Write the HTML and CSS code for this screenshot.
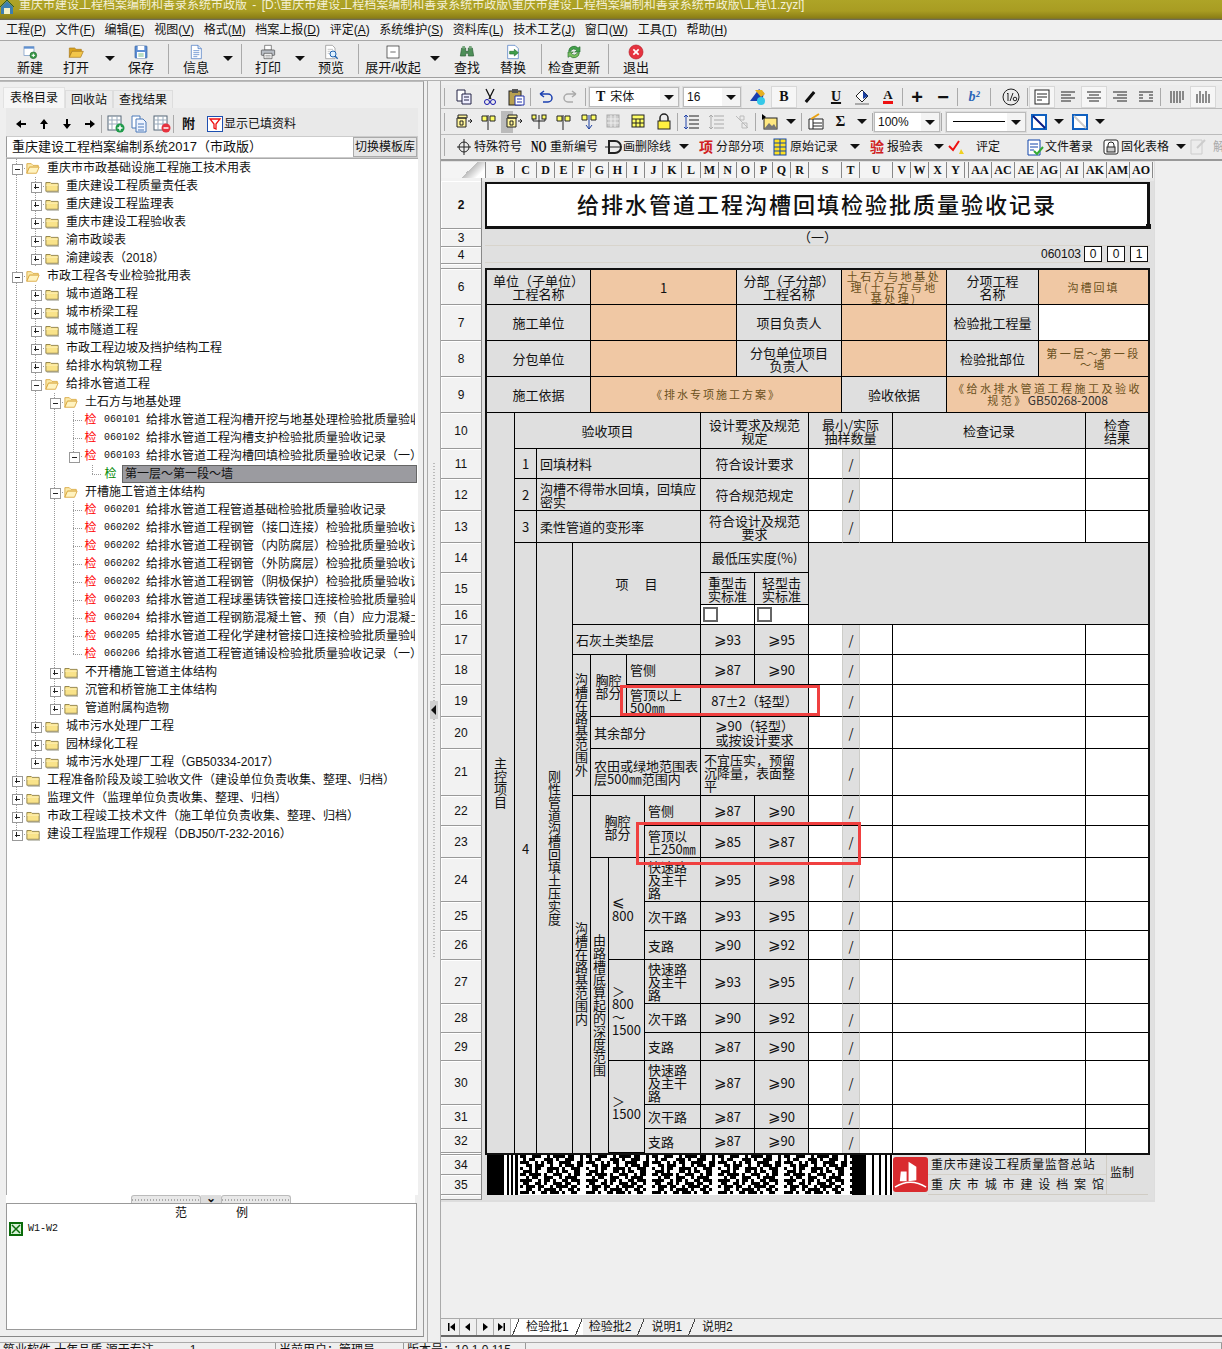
FILE: index.html
```html
<!DOCTYPE html>
<html lang="zh">
<head>
<meta charset="utf-8">
<title>重庆市建设工程档案编制和善录系统市政版</title>
<link rel="stylesheet" href="styles.css">
</head>
<body>
<svg class="defs" width="0" height="0">
  <defs>
    <symbol id="new" viewBox="0 0 24 24"><rect x="3" y="4" width="15" height="13" fill="#fff" stroke="#6b8fc0"/><rect x="3" y="4" width="15" height="3" fill="#5f8fd0"/><circle cx="17" cy="17" r="5" fill="#3a9a4a" stroke="#1f6a2e"/><path d="M14.500 17h5M17 14.500v5" stroke="#fff" stroke-width="1.500"/></symbol>
    <symbol id="open" viewBox="0 0 24 24"><path d="M2 6h8l2 2h8v3H6l-4 9z" fill="#d9a21f" stroke="#a8791a"/><path d="M6 11h17l-4 9H2z" fill="#f3c64a" stroke="#a8791a"/></symbol>
    <symbol id="save" viewBox="0 0 24 24"><rect x="3" y="3" width="18" height="18" rx="1" fill="#5d8ed4" stroke="#2f5f9f"/><rect x="7" y="3" width="10" height="6" fill="#fff"/><rect x="6" y="12" width="12" height="9" fill="#fff"/><path d="M8 15h8M8 18h8" stroke="#2f9a4a"/></symbol>
    <symbol id="info" viewBox="0 0 24 24"><path d="M5 2h10l5 5v15H5z" fill="#fff" stroke="#3d6fc0"/><path d="M15 2v5h5" fill="#d7e4f6" stroke="#3d6fc0"/><path d="M8 10h9M8 13h9M8 16h9M8 19h6" stroke="#3d6fc0"/></symbol>
    <symbol id="print" viewBox="0 0 24 24"><path d="M7 2h10v7H7z" fill="#fff" stroke="#555"/><rect x="2" y="9" width="20" height="8" rx="1" fill="#b9bec5" stroke="#444"/><path d="M6 14h12v8H6z" fill="#fff" stroke="#444"/><path d="M8 17h8M8 19.500h8" stroke="#777"/></symbol>
    <symbol id="preview" viewBox="0 0 24 24"><path d="M4 2h10l4 4v16H4z" fill="#fff" stroke="#888"/><path d="M7 8h8M7 11h4M7 14h4" stroke="#aaa"/><circle cx="15" cy="15" r="4.500" fill="#dff1ff" stroke="#1e62b0" stroke-width="1.500"/><path d="M18 18l4 4" stroke="#1e62b0" stroke-width="2"/></symbol>
    <symbol id="expand" viewBox="0 0 24 24"><rect x="3" y="3" width="18" height="18" fill="#fff" stroke="#222"/><path d="M8 12h8" stroke="#222"/></symbol>
    <symbol id="find" viewBox="0 0 24 24"><path d="M4 6h6v5h4V6h6l2 12h-8v-4h-4v4H2z" fill="#4e8f58" stroke="#2c5e35"/><rect x="5" y="3" width="4" height="4" fill="#7aaa80"/><rect x="15" y="3" width="4" height="4" fill="#7aaa80"/></symbol>
    <symbol id="replace" viewBox="0 0 24 24"><path d="M4 2h11l5 5v15H4z" fill="#fff" stroke="#3d6fc0"/><path d="M7 11h7V8l6 5-6 5v-3H7z" fill="#3f9f4a" stroke="#217030"/></symbol>
    <symbol id="update" viewBox="0 0 24 24"><path d="M4 11a8 8 0 0 1 14-5l3-2v8h-8l3-2a5 5 0 0 0-9 1z" fill="#43a04a" stroke="#257030"/><path d="M20 13a8 8 0 0 1-14 5l-3 2v-8h8l-3 2a5 5 0 0 0 9-1z" fill="#7cc060" stroke="#257030"/></symbol>
    <symbol id="exit" viewBox="0 0 24 24"><circle cx="12" cy="12" r="10.500" fill="#e6333f" stroke="#b81a26"/><path d="M8 8l8 8M16 8l-8 8" stroke="#fff" stroke-width="2.500"/></symbol>
    <symbol id="fo" viewBox="0 0 16 16"><path d="M1 3h5l2 2h6v2H4l-3 7z" fill="#fbe9a8" stroke="#d9a840"/><path d="M4 7h11l-3 7H1z" fill="#fff3c0" stroke="#d9a840"/></symbol>
    <symbol id="fc" viewBox="0 0 16 16"><path d="M1 4h5l1 1h8v9H1z" fill="#f9e38a" stroke="#8a7a40"/><path d="M1 7h14" stroke="#fff4c0"/><path d="M2 15h14V6" fill="none" stroke="#998" /></symbol>
    <symbol id="ins" viewBox="0 0 18 18"><path d="M3 2h9v3h-9zM2 5h9v9H2zM5 8h3v4H5z" fill="#fff59a" stroke="#222"/><path d="M13 8h4M15 6l2 2-2 2" stroke="#222" fill="none"/></symbol>
    <symbol id="cross" viewBox="0 0 18 18"><path d="M2 3h5v5H2zM10 3h5v5h-5z" fill="#ff6" stroke="#222"/><path d="M8 2v15" stroke="#222"/></symbol>
    <symbol id="li" viewBox="0 0 18 18"><path d="M6 3h10M6 7h10M6 11h10M6 15h10" stroke="#222"/><path d="M3 2v14M1 4l2-2 2 2M1 14l2 2 2-2" stroke="#24a" fill="none"/></symbol>
    <symbol id="lid" viewBox="0 0 18 18"><path d="M6 3h10M6 7h10M6 11h10M6 15h10" stroke="#aaa"/><path d="M3 2v14M1 4l2-2 2 2M1 14l2 2 2-2" stroke="#aaa" fill="none"/></symbol>
  </defs>
</svg>

<div class="app">
  <header class="titlebar">
    <svg class="house" viewBox="0 0 14 14"><path d="M1 7l6-6 6 6v7H1z" fill="#3d7fb0"/><path d="M4 8h6v6H4z" fill="#f3f0c8"/><path d="M0 7l7-7 7 7" fill="none" stroke="#2a5c2a"/></svg>
    <span>重庆市建设工程档案编制和善录系统市政版 - [D:\重庆市建设工程档案编制和善录系统市政版\重庆市建设工程档案编制和善录系统市政版\工程\1.zyzl]</span>
  </header>

  <nav class="menubar">
    <span>工程(<u>P</u>)</span><span>文件(<u>F</u>)</span><span>编辑(<u>E</u>)</span><span>视图(<u>V</u>)</span><span>格式(<u>M</u>)</span><span>档案上报(<u>D</u>)</span><span>评定(<u>A</u>)</span><span>系统维护(<u>S</u>)</span><span>资料库(<u>L</u>)</span><span>技术工艺(<u>J</u>)</span><span>窗口(<u>W</u>)</span><span>工具(<u>T</u>)</span><span>帮助(<u>H</u>)</span>
  </nav>

  <div class="toolbar">
    <div class="tb w44"><svg class="ic"><use href="#new"/></svg>新建</div>
    <div class="tb w48"><svg class="ic"><use href="#open"/></svg>打开</div>
    <div class="drop w20"></div>
    <div class="tb w42"><svg class="ic"><use href="#save"/></svg>保存</div>
    <div class="sep w12"></div>
    <div class="tb w44"><svg class="ic"><use href="#info"/></svg>信息</div>
    <div class="drop w20"></div>
    <div class="sep w6"></div>
    <div class="tb w48"><svg class="ic"><use href="#print"/></svg>打印</div>
    <div class="drop w16"></div>
    <div class="tb w46"><svg class="ic"><use href="#preview"/></svg>预览</div>
    <div class="sep w8"></div>
    <div class="tb w62"><svg class="ic"><use href="#expand"/></svg>展开/收起</div>
    <div class="drop w22"></div>
    <div class="tb w42"><svg class="ic"><use href="#find"/></svg>查找</div>
    <div class="tb w50"><svg class="ic"><use href="#replace"/></svg>替换</div>
    <div class="sep w6"></div>
    <div class="tb w60"><svg class="ic"><use href="#update"/></svg>检查更新</div>
    <div class="sep w8"></div>
    <div class="tb w48"><svg class="ic"><use href="#exit"/></svg>退出</div>
  </div>

  <main class="main">
    <aside class="left">
      <div class="tabs">
        <span class="tab on">表格目录</span><span class="tab">回收站</span><span class="tab">查找结果</span>
      </div>
      <div class="lbody">
        <div class="ltool">
          <svg class="arr" viewBox="0 0 12 12"><path d="M1 6l5-4v3h5v2H6v3z"/></svg>
          <svg class="arr" viewBox="0 0 12 12"><path d="M6 1l4 5H7v5H5V6H2z"/></svg>
          <svg class="arr" viewBox="0 0 12 12"><path d="M6 11l4-5H7V1H5v5H2z"/></svg>
          <svg class="arr" viewBox="0 0 12 12"><path d="M11 6L6 2v3H1v2h5v3z"/></svg>
          <i class="lsep sa"></i>
          <svg class="lic" viewBox="0 0 18 18"><rect x="1" y="1" width="13" height="14" fill="#fff" stroke="#567"/><path d="M1 5h13M1 9h13M5 1v14M10 1v14" stroke="#9ab"/><circle cx="13" cy="13" r="4.500" fill="#1f9a4a"/><path d="M10.500 13h5M13 10.500v5" stroke="#fff" stroke-width="1.500"/></svg>
          <svg class="lic" viewBox="0 0 18 18"><path d="M2 1h8v12H2z" fill="#fff" stroke="#4a78b8"/><path d="M6 4h7l3 3v10H6z" fill="#eef4ff" stroke="#4a78b8"/><path d="M8 9h6M8 12h6M8 15h6" stroke="#4a78b8"/></svg>
          <svg class="lic" viewBox="0 0 18 18"><rect x="1" y="1" width="13" height="14" fill="#fff" stroke="#567"/><path d="M1 5h13M1 9h13M5 1v14M10 1v14" stroke="#9ab"/><circle cx="13" cy="13" r="4.500" fill="#e6333f"/><path d="M10.500 13h5" stroke="#fff" stroke-width="1.500"/></svg>
          <i class="lsep sb"></i>
          <b class="fu">附</b>
          <svg class="filter" viewBox="0 0 16 16"><rect x=".5" y=".5" width="15" height="15" fill="#fff" stroke="#1d4fb0"/><path d="M3 3h10L9 8v5l-2-1V8z" fill="none" stroke="#e11" stroke-width="1.300"/></svg>
          <span class="ltxt">显示已填资料</span>
        </div>
        <div class="combo">
          <span class="combo-t">重庆建设工程档案编制系统2017（市政版）</span>
          <span class="combo-b">切换模板库</span>
        </div>
        <div class="tree">
          <div class="row"><i class="c m"></i><svg class="fd"><use href="#fo"/></svg><span>重庆市市政基础设施工程施工技术用表</span></div>
          <div class="row"><i class="c g"></i><i class="c p"></i><svg class="fd"><use href="#fc"/></svg><span>重庆建设工程质量责任表</span></div>
          <div class="row"><i class="c g"></i><i class="c p"></i><svg class="fd"><use href="#fc"/></svg><span>重庆建设工程监理表</span></div>
          <div class="row"><i class="c g"></i><i class="c p"></i><svg class="fd"><use href="#fc"/></svg><span>重庆市建设工程验收表</span></div>
          <div class="row"><i class="c g"></i><i class="c p"></i><svg class="fd"><use href="#fc"/></svg><span>渝市政竣表</span></div>
          <div class="row"><i class="c g"></i><i class="c p"></i><svg class="fd"><use href="#fc"/></svg><span>渝建竣表（2018）</span></div>
          <div class="row"><i class="c m"></i><svg class="fd"><use href="#fo"/></svg><span>市政工程各专业检验批用表</span></div>
          <div class="row"><i class="c g"></i><i class="c p"></i><svg class="fd"><use href="#fc"/></svg><span>城市道路工程</span></div>
          <div class="row"><i class="c g"></i><i class="c p"></i><svg class="fd"><use href="#fc"/></svg><span>城市桥梁工程</span></div>
          <div class="row"><i class="c g"></i><i class="c p"></i><svg class="fd"><use href="#fc"/></svg><span>城市隧道工程</span></div>
          <div class="row"><i class="c g"></i><i class="c p"></i><svg class="fd"><use href="#fc"/></svg><span>市政工程边坡及挡护结构工程</span></div>
          <div class="row"><i class="c g"></i><i class="c p"></i><svg class="fd"><use href="#fc"/></svg><span>给排水构筑物工程</span></div>
          <div class="row"><i class="c g"></i><i class="c m"></i><svg class="fd"><use href="#fo"/></svg><span>给排水管道工程</span></div>
          <div class="row"><i class="c g"></i><i class="c g"></i><i class="c m"></i><svg class="fd"><use href="#fo"/></svg><span>土石方与地基处理</span></div>
          <div class="row"><i class="c g"></i><i class="c g"></i><i class="c g"></i><i class="c t"></i><b class="jian">检</b><span class="code">060101</span><span>给排水管道工程沟槽开挖与地基处理检验批质量验收记录</span></div>
          <div class="row"><i class="c g"></i><i class="c g"></i><i class="c g"></i><i class="c t"></i><b class="jian">检</b><span class="code">060102</span><span>给排水管道工程沟槽支护检验批质量验收记录</span></div>
          <div class="row"><i class="c g"></i><i class="c g"></i><i class="c g"></i><i class="c m e"></i><b class="jian">检</b><span class="code">060103</span><span>给排水管道工程沟槽回填检验批质量验收记录（一）</span></div>
          <div class="row wide"><i class="c g"></i><i class="c g"></i><i class="c g"></i><i class="c"></i><i class="c l"></i><b class="jian ok">检</b><span class="sel">第一层～第一段～墙</span></div>
          <div class="row"><i class="c g"></i><i class="c g"></i><i class="c m"></i><svg class="fd"><use href="#fo"/></svg><span>开槽施工管道主体结构</span></div>
          <div class="row"><i class="c g"></i><i class="c g"></i><i class="c g"></i><i class="c t"></i><b class="jian">检</b><span class="code">060201</span><span>给排水管道工程管道基础检验批质量验收记录</span></div>
          <div class="row"><i class="c g"></i><i class="c g"></i><i class="c g"></i><i class="c t"></i><b class="jian">检</b><span class="code">060202</span><span>给排水管道工程钢管（接口连接）检验批质量验收记录</span></div>
          <div class="row"><i class="c g"></i><i class="c g"></i><i class="c g"></i><i class="c t"></i><b class="jian">检</b><span class="code">060202</span><span>给排水管道工程钢管（内防腐层）检验批质量验收记录</span></div>
          <div class="row"><i class="c g"></i><i class="c g"></i><i class="c g"></i><i class="c t"></i><b class="jian">检</b><span class="code">060202</span><span>给排水管道工程钢管（外防腐层）检验批质量验收记录</span></div>
          <div class="row"><i class="c g"></i><i class="c g"></i><i class="c g"></i><i class="c t"></i><b class="jian">检</b><span class="code">060202</span><span>给排水管道工程钢管（阴极保护）检验批质量验收记录</span></div>
          <div class="row"><i class="c g"></i><i class="c g"></i><i class="c g"></i><i class="c t"></i><b class="jian">检</b><span class="code">060203</span><span>给排水管道工程球墨铸铁管接口连接检验批质量验收记录</span></div>
          <div class="row"><i class="c g"></i><i class="c g"></i><i class="c g"></i><i class="c t"></i><b class="jian">检</b><span class="code">060204</span><span>给排水管道工程钢筋混凝土管、预（自）应力混凝土管</span></div>
          <div class="row"><i class="c g"></i><i class="c g"></i><i class="c g"></i><i class="c t"></i><b class="jian">检</b><span class="code">060205</span><span>给排水管道工程化学建材管接口连接检验批质量验收记录</span></div>
          <div class="row"><i class="c g"></i><i class="c g"></i><i class="c g"></i><i class="c l"></i><b class="jian">检</b><span class="code">060206</span><span>给排水管道工程管道铺设检验批质量验收记录（一）</span></div>
          <div class="row"><i class="c g"></i><i class="c g"></i><i class="c p"></i><svg class="fd"><use href="#fc"/></svg><span>不开槽施工管道主体结构</span></div>
          <div class="row"><i class="c g"></i><i class="c g"></i><i class="c p"></i><svg class="fd"><use href="#fc"/></svg><span>沉管和桥管施工主体结构</span></div>
          <div class="row"><i class="c g"></i><i class="c g"></i><i class="c p e"></i><svg class="fd"><use href="#fc"/></svg><span>管道附属构造物</span></div>
          <div class="row"><i class="c g"></i><i class="c p"></i><svg class="fd"><use href="#fc"/></svg><span>城市污水处理厂工程</span></div>
          <div class="row"><i class="c g"></i><i class="c p"></i><svg class="fd"><use href="#fc"/></svg><span>园林绿化工程</span></div>
          <div class="row"><i class="c g"></i><i class="c p e"></i><svg class="fd"><use href="#fc"/></svg><span>城市污水处理厂工程（GB50334-2017）</span></div>
          <div class="row"><i class="c p"></i><svg class="fd"><use href="#fc"/></svg><span>工程准备阶段及竣工验收文件（建设单位负责收集、整理、归档）</span></div>
          <div class="row"><i class="c p"></i><svg class="fd"><use href="#fc"/></svg><span>监理文件（监理单位负责收集、整理、归档）</span></div>
          <div class="row"><i class="c p"></i><svg class="fd"><use href="#fc"/></svg><span>市政工程竣工技术文件（施工单位负责收集、整理、归档）</span></div>
          <div class="row"><i class="c p e"></i><svg class="fd"><use href="#fc"/></svg><span>建设工程监理工作规程（DBJ50/T-232-2016）</span></div>
        </div>
        <div class="hgrip"><span class="dots"></span><span class="hbtn">⌄</span><span class="dots"></span></div>
        <div class="sample">
          <div class="sample-h"><span>范</span><span>例</span></div>
          <div class="sample-r">
            <svg class="xl" viewBox="0 0 14 14"><rect width="14" height="14" fill="#0a6b0a"/><rect x="2" y="2" width="10" height="10" fill="#d8f0d8"/><path d="M3 3l8 8M11 3l-8 8" stroke="#0a6b0a" stroke-width="1.500"/></svg>
            <span class="w1">W1-W2</span>
          </div>
        </div>
      </div>
    </aside>

    <div class="vsplit"><span class="vdots"></span><span class="vbtn"></span><span class="vdots"></span></div>

    <section class="right">
      <div class="rt r1">
        <i class="grip"></i>
        <span class="b"><svg viewBox="0 0 18 18"><path d="M2 2h8v11H2z" fill="#fff" stroke="#224"/><path d="M7 6h9v10H7z" fill="#eef" stroke="#224"/><path d="M9 9h5M9 12h5" stroke="#224"/></svg></span>
        <span class="b"><svg viewBox="0 0 18 18"><path d="M5 1l5 10M13 1L8 11" stroke="#111" fill="none" stroke-width="1.300"/><circle cx="6" cy="14" r="2.500" fill="none" stroke="#11a"/><circle cx="12" cy="14" r="2.500" fill="none" stroke="#11a"/></svg></span>
        <span class="b"><svg viewBox="0 0 18 18"><rect x="2" y="3" width="12" height="14" fill="#b8a050" stroke="#222"/><rect x="5" y="1" width="6" height="4" fill="#555"/><path d="M8 8h9v9H8z" fill="#fff" stroke="#23a"/><path d="M10 11h5M10 14h5" stroke="#23a"/></svg></span>
        <i class="sp"></i>
        <span class="b"><svg viewBox="0 0 18 18"><path d="M4 6h8a4 4 0 0 1 0 8H7M4 6l4-3M4 6l4 3" fill="none" stroke="#1a3fb0" stroke-width="1.500"/></svg></span>
        <span class="b"><svg viewBox="0 0 18 18"><path d="M14 6H6a4 4 0 0 0 0 8h5M14 6l-4-3M14 6l-4 3" fill="none" stroke="#aaa" stroke-width="1.500"/></svg></span>
        <i class="sp"></i>
        <div class="sel-box w90 ml2"><span class="fnt-t">T</span>宋体<i class="cb"></i></div>
        <div class="sel-box w58 ml4">16<i class="cb"></i></div>
        <span class="b ml4"><svg viewBox="0 0 18 18"><path d="M1 13l9-12 5 4-2 8z" fill="#1a3fb0"/><path d="M6 2h7l3 4-4 3z" fill="#e8b020"/><circle cx="12" cy="13" r="4" fill="#35c8e8"/></svg></span>
        <span class="b act"><b class="bt">B</b></span>
        <span class="b"><i class="it"></i></span>
        <span class="b"><u class="bt">U</u></span>
        <span class="b"><svg viewBox="0 0 18 18"><path d="M3 8l6-6 6 6-6 6z" fill="#fff" stroke="#222"/><path d="M10 3l5 5-5 3z" fill="#1a3fa0"/><rect x="2" y="15" width="14" height="2" fill="#aaa"/></svg></span>
        <span class="b"><span class="ac">A</span></span>
        <i class="sp"></i>
        <span class="b"><b class="pm">+</b></span>
        <span class="b"><b class="pm">−</b></span>
        <i class="sp"></i>
        <span class="b wd30"><span class="b2">b²</span></span>
        <i class="sp"></i>
        <span class="b wd30 ml4"><svg viewBox="0 0 18 18"><circle cx="9" cy="9" r="8" fill="none" stroke="#222"/><path d="M5 6l1-1v8M8 13l3-8" stroke="#222" fill="none"/><circle cx="13" cy="11" r="1.800" fill="none" stroke="#222"/></svg></span>
        <i class="sp"></i>
        <span class="b act"><svg viewBox="0 0 18 18"><rect x="2" y="2" width="14" height="14" fill="#fff" stroke="#222"/><path d="M4 6h10M4 9h10M4 12h5" stroke="#222"/></svg></span>
        <span class="b"><svg viewBox="0 0 18 18"><path d="M2 4h14M2 7h10M2 10h14M2 13h10" stroke="#222"/></svg></span>
        <span class="b act"><svg viewBox="0 0 18 18"><path d="M2 4h14M4 7h10M2 10h14M4 13h10" stroke="#222"/></svg></span>
        <span class="b"><svg viewBox="0 0 18 18"><path d="M2 4h14M6 7h10M2 10h14M6 13h10" stroke="#222"/></svg></span>
        <span class="b"><svg viewBox="0 0 18 18"><path d="M2 4h14M2 7h4m6 0h4M2 10h4m6 0h4M2 13h14" stroke="#222"/></svg></span>
        <i class="sp ml4"></i>
        <span class="b ml2"><svg viewBox="0 0 18 18"><path d="M3 3v12M6 3v12M9 3v12M12 3v12M15 3v9" stroke="#222"/></svg></span>
        <span class="b act"><svg viewBox="0 0 18 18"><path d="M3 6v9M6 3v12M9 6v9M12 3v12M15 6v9" stroke="#222"/></svg></span>
      </div>

      <div class="rt r2">
        <i class="grip"></i>
        <span class="b"><svg><use href="#ins"/></svg></span>
        <span class="b"><svg><use href="#cross"/></svg></span>
        <span class="b act2"><svg><use href="#ins"/></svg></span>
        <span class="b"><svg viewBox="0 0 18 18"><path d="M3 2v6h3M9 2v6M15 2v6h-3M9 8v8M6 8h6" stroke="#222" fill="none"/><rect x="2" y="2" width="4" height="4" fill="#ff6" stroke="#222"/><rect x="12" y="2" width="4" height="4" fill="#ff6" stroke="#222"/></svg></span>
        <span class="b"><svg><use href="#cross"/></svg></span>
        <span class="b"><svg viewBox="0 0 18 18"><path d="M2 2h5v5H2zM11 2h5v5h-5z" fill="#ff6" stroke="#222"/><path d="M9 2v14M6 12l3 4 3-4" stroke="#1a3fa0" fill="none"/></svg></span>
        <span class="b"><svg viewBox="0 0 18 18"><rect x="2" y="2" width="12" height="12" fill="#ccc" stroke="#aaa"/><path d="M2 6h12M2 10h12M6 2v12M10 2v12" stroke="#eee"/></svg></span>
        <span class="b"><svg viewBox="0 0 18 18"><rect x="2" y="2" width="12" height="12" fill="#ff6" stroke="#222"/><path d="M2 6h12M2 10h12M6 6v8M10 6v8" stroke="#222"/></svg></span>
        <span class="b"><svg viewBox="0 0 18 18"><path d="M5 8V5a4 4 0 0 1 8 0v3" fill="none" stroke="#222" stroke-width="1.500"/><rect x="3" y="8" width="12" height="8" fill="#fff040" stroke="#222"/></svg></span>
        <i class="sp"></i>
        <span class="b"><svg><use href="#li"/></svg></span>
        <span class="b"><svg><use href="#lid"/></svg></span>
        <span class="b"><svg viewBox="0 0 18 18"><path d="M3 3l12 12M7 3h4v4H7zM9 10h5v5H9z" fill="none" stroke="#bbb"/></svg></span>
        <i class="sp"></i>
        <span class="b"><svg viewBox="0 0 18 18"><rect x="3" y="5" width="13" height="11" fill="#ffe880" stroke="#222"/><path d="M3 16l5-6 3 3 2-2 3 5z" fill="#777"/><path d="M1 1l4 3-4 3z" fill="#000"/></svg></span>
        <i class="drop w18"></i>
        <i class="sp"></i>
        <span class="b"><svg viewBox="0 0 18 18"><path d="M2 6h14v10H2z" fill="#fff" stroke="#222"/><path d="M6 10h9M6 13h9M6 6v10" stroke="#222"/><path d="M4 6l8-5" stroke="#e8a010" stroke-width="2"/></svg></span>
        <span class="b sig">Σ</span>
        <i class="drop w18"></i>
        <i class="sp"></i>
        <div class="sel-box w66">100%<i class="cb"></i></div>
        <i class="sp"></i>
        <div class="sel-box w80 ml3"><i class="ln"></i><i class="cb"></i></div>
        <span class="b"><svg viewBox="0 0 18 18"><rect x="2" y="2" width="14" height="14" fill="#fff" stroke="#1060c0" stroke-width="2"/><path d="M3 3l12 12" stroke="#0a1a80" stroke-width="2"/></svg></span>
        <i class="drop w16"></i>
        <span class="b"><svg viewBox="0 0 18 18"><rect x="2" y="2" width="14" height="14" fill="#fff" stroke="#1060c0" stroke-width="2"/><path d="M3 3l12 12" stroke="#ccc" stroke-width="2"/></svg></span>
        <i class="drop w16"></i>
      </div>

      <div class="rt r3">
        <i class="grip"></i>
        <span class="f w80 pl4"><svg viewBox="0 0 18 18"><circle cx="9" cy="9" r="5" fill="none" stroke="#222"/><path d="M9 1v16M2 9h14" stroke="#222"/></svg>特殊符号</span>
        <span class="f w73"><b class="no">NO</b>重新编号</span>
        <span class="f w70"><svg viewBox="0 0 18 18"><path d="M5 3h6a6 6 0 0 1 0 12H5z" fill="none" stroke="#222" stroke-width="2"/><path d="M1 9h16" stroke="#222"/></svg>画删除线</span>
        <i class="drop w20"></i>
        <span class="f w77 pl3"><b class="xiang">项</b>分部分项</span>
        <span class="f w74"><svg viewBox="0 0 18 18"><rect x="3" y="1" width="12" height="16" fill="#ffe020" stroke="#14a"/><path d="M9 1v16M3 5h12M3 9h12M3 13h12" stroke="#14a"/></svg>原始记录</span>
        <i class="drop w20"></i>
        <span class="f w66 pl3"><b class="xiang">验</b>报验表</span>
        <i class="drop w16"></i>
        <span class="f w79"><svg viewBox="0 0 18 18"><path d="M2 8l4 4 6-9" fill="none" stroke="#e11" stroke-width="2"/><path d="M12 16l2-5 3 5z" fill="#f0d020"/></svg><em class="pl">评定</em></span>
        <span class="f w76"><svg viewBox="0 0 18 18"><path d="M2 2h12v15H2z" fill="#fff" stroke="#14a"/><path d="M4 6h8M4 9h8M4 12h4" stroke="#14a"/><path d="M8 13l3 3 6-7" fill="none" stroke="#3a3" stroke-width="2"/></svg>文件著录</span>
        <span class="f w71"><svg viewBox="0 0 18 18"><rect x="2" y="2" width="14" height="14" rx="2" fill="#fff" stroke="#222"/><path d="M6 9V7a3 3 0 0 1 6 0v2" fill="none" stroke="#222"/><rect x="5" y="9" width="8" height="5" fill="#ccc" stroke="#222"/></svg>固化表格</span>
        <i class="drop w16"></i>
        <span class="f dis"><svg viewBox="0 0 18 18"><path d="M2 2h11v14H2z" fill="none" stroke="#ccc"/><path d="M8 10l8-8" stroke="#ccc" stroke-width="2"/></svg>解除固化</span>
      </div>

      <div class="sheet">
        <div class="colhead">
          <span class="corner"></span>
          <span class="w29">B</span><span class="w22">C</span><span class="w18">D</span><span class="w18">E</span><span class="w18">F</span><span class="w18">G</span><span class="w18">H</span><span class="w18">I</span><span class="w18">J</span><span class="w19">K</span><span class="w19">L</span><span class="w18">M</span><span class="w18">N</span><span class="w18">O</span><span class="w18">P</span><span class="w18">Q</span><span class="w18">R</span><span class="w33">S</span><span class="w18">T</span><span class="w33">U</span><span class="w18">V</span><span class="w18">W</span><span class="w18">X</span><span class="w18">Y</span><span class="w4"></span><span class="w23">AA</span><span class="w23">AC</span><span class="w23">AE</span><span class="w23">AG</span><span class="w23">AI</span><span class="w23">AK</span><span class="w23">AM</span><span class="w23">AO</span>
        </div>
        <div class="stub"><i class="rh-stub"></i></div>
        <div class="sheet-body">
          <div class="rowheads">
            <div class="rh h48 bold">2</div><div class="rh h18">3</div><div class="rh h17">4</div><div class="rh h5"></div>
            <div class="rh h36">6</div><div class="rh h36">7</div><div class="rh h36">8</div><div class="rh h36">9</div><div class="rh h36">10</div>
            <div class="rh h30">11</div><div class="rh h32">12</div><div class="rh h32">13</div><div class="rh h30">14</div><div class="rh h32">15</div>
            <div class="rh h20">16</div><div class="rh h30">17</div><div class="rh h30">18</div><div class="rh h32">19</div><div class="rh h32">20</div>
            <div class="rh h47">21</div><div class="rh h30">22</div><div class="rh h32">23</div><div class="rh h44">24</div><div class="rh h29">25</div>
            <div class="rh h29">26</div><div class="rh h44">27</div><div class="rh h29">28</div><div class="rh h28">29</div><div class="rh h44">30</div>
            <div class="rh h24">31</div><div class="rh h24">32</div><div class="rh h2"></div><div class="rh h20">34</div><div class="rh h20">35</div><div class="rh h5"></div>
          </div>
          <div class="gridarea">
            <div class="titlecell">给排水管道工程沟槽回填检验批质量验收记录</div>
            <div class="sub">（一）</div>
            <div class="codebar"><span class="cd">060103</span><span class="bx">0</span><span class="bx">0</span><span class="bx">1</span></div>
            <div class="gap5"></div>

            <table class="form">
              <colgroup>
                <col class="c28"><col class="c22"><col class="c36"><col class="c18"><col class="c18"><col class="c18"><col class="c18"><col class="c56"><col class="c36"><col class="c18"><col class="c54"><col class="c33"><col class="c18"><col class="c33"><col class="c54"><col class="c92"><col class="c47"><col class="c62">
              </colgroup>
              <tr class="h35">
                <td colspan="4">单位（子单位）<br>工程名称</td><td colspan="5" class="or">1</td>
                <td colspan="3">分部（子分部）<br>工程名称</td>
                <td colspan="3" class="or fill fs11">土石方与地基处<br>理(土石方与地<br>基处理)</td>
                <td>分项工程<br>名称</td><td colspan="2" class="or fill last">沟槽回填</td>
              </tr>
              <tr class="h36">
                <td colspan="4">施工单位</td><td colspan="5" class="or"></td>
                <td colspan="3">项目负责人</td><td colspan="3" class="or"></td>
                <td>检验批工程量</td><td colspan="2" class="wh last"></td>
              </tr>
              <tr class="h36">
                <td colspan="4">分包单位</td><td colspan="5" class="or"></td>
                <td colspan="3">分包单位项目<br>负责人</td><td colspan="3" class="or"></td>
                <td>检验批部位</td><td colspan="2" class="or fill fs11 last">第一层～第一段<br>～墙</td>
              </tr>
              <tr class="h36">
                <td colspan="4">施工依据</td><td colspan="8" class="or fill">《排水专项施工方案》</td>
                <td colspan="3">验收依据</td>
                <td colspan="3" class="or fill last fs11">《给水排水管道工程施工及验收<br>规范》<span class="nols">GB50268-2008</span></td>
              </tr>
              <tr class="h36">
                <td rowspan="23"><span class="v">主控项目</span></td>
                <td colspan="7">验收项目</td><td colspan="3">设计要求及规范<br>规定</td>
                <td colspan="3">最小/实际<br>抽样数量</td><td colspan="3">检查记录</td><td class="last">检查<br>结果</td>
              </tr>
              <tr class="h30">
                <td>1</td><td colspan="6" class="lf">回填材料</td><td colspan="3">符合设计要求</td>
                <td class="wh nr"></td><td class="sl">/</td><td class="wh"></td><td colspan="3" class="wh"></td><td class="wh last"></td>
              </tr>
              <tr class="h32">
                <td>2</td><td colspan="6" class="lf">沟槽不得带水回填，回填应<br>密实</td><td colspan="3">符合规范规定</td>
                <td class="wh nr"></td><td class="sl">/</td><td class="wh"></td><td colspan="3" class="wh"></td><td class="wh last"></td>
              </tr>
              <tr class="h32">
                <td>3</td><td colspan="6" class="lf">柔性管道的变形率</td><td colspan="3">符合设计及规范<br>要求</td>
                <td class="wh nr"></td><td class="sl">/</td><td class="wh"></td><td colspan="3" class="wh"></td><td class="wh last"></td>
              </tr>
              <tr class="h30">
                <td rowspan="19">4</td>
                <td rowspan="19"><span class="v">刚性管道沟槽回填土压实度</span></td>
                <td colspan="5" rowspan="3">项&emsp;&nbsp;目</td>
                <td colspan="3">最低压实度(%)</td>
                <td colspan="7" rowspan="3" class="last"></td>
              </tr>
              <tr class="h32"><td colspan="2">重型击<br>实标准</td><td>轻型击<br>实标准</td></tr>
              <tr class="h20"><td colspan="2" class="wh lf2"><i class="ck"></i></td><td class="wh lf2"><i class="ck"></i></td></tr>
              <tr class="h30">
                <td colspan="5" class="lf">石灰土类垫层</td><td colspan="2"><i class="ge">⩾</i>93</td><td><i class="ge">⩾</i>95</td>
                <td class="wh nr"></td><td class="sl">/</td><td class="wh"></td><td colspan="3" class="wh"></td><td class="wh last"></td>
              </tr>
              <tr class="h30">
                <td rowspan="4"><span class="v">沟槽在路基范围外</span></td>
                <td colspan="2" rowspan="2">胸腔<br>部分</td>
                <td colspan="2" class="lf">管侧</td><td colspan="2"><i class="ge">⩾</i>87</td><td><i class="ge">⩾</i>90</td>
                <td class="wh nr"></td><td class="sl">/</td><td class="wh"></td><td colspan="3" class="wh"></td><td class="wh last"></td>
              </tr>
              <tr class="h32">
                <td colspan="2" class="lf">管顶以上<br>500㎜</td><td colspan="3">87±2（轻型）</td>
                <td class="wh nr"></td><td class="sl">/</td><td class="wh"></td><td colspan="3" class="wh"></td><td class="wh last"></td>
              </tr>
              <tr class="h32">
                <td colspan="4" class="lf">其余部分</td><td colspan="3"><i class="ge">⩾</i>90（轻型）<br>或按设计要求</td>
                <td class="wh nr"></td><td class="sl">/</td><td class="wh"></td><td colspan="3" class="wh"></td><td class="wh last"></td>
              </tr>
              <tr class="h47">
                <td colspan="4" class="lf">农田或绿地范围表<br>层500㎜范围内</td><td colspan="3" class="lf">不宜压实，预留<br>沉降量，表面整<br>平</td>
                <td class="wh nr"></td><td class="sl">/</td><td class="wh"></td><td colspan="3" class="wh"></td><td class="wh last"></td>
              </tr>
              <tr class="h30">
                <td rowspan="11"><span class="v">沟槽在路基范围内</span></td>
                <td colspan="3" rowspan="2">胸腔<br>部分</td>
                <td class="lf">管侧</td><td colspan="2"><i class="ge">⩾</i>87</td><td><i class="ge">⩾</i>90</td>
                <td class="wh nr"></td><td class="sl">/</td><td class="wh"></td><td colspan="3" class="wh"></td><td class="wh last"></td>
              </tr>
              <tr class="h32">
                <td class="lf">管顶以<br>上250㎜</td><td colspan="2"><i class="ge">⩾</i>85</td><td><i class="ge">⩾</i>87</td>
                <td class="wh nr"></td><td class="sl">/</td><td class="wh"></td><td colspan="3" class="wh"></td><td class="wh last"></td>
              </tr>
              <tr class="h44">
                <td rowspan="9"><span class="v">由路槽底算起的深度范围</span></td>
                <td colspan="2" rowspan="3" class="lf"><i class="ge">⩽</i><br>800</td>
                <td class="lf">快速路<br>及主干<br>路</td><td colspan="2"><i class="ge">⩾</i>95</td><td><i class="ge">⩾</i>98</td>
                <td class="wh nr"></td><td class="sl">/</td><td class="wh"></td><td colspan="3" class="wh"></td><td class="wh last"></td>
              </tr>
              <tr class="h29">
                <td class="lf">次干路</td><td colspan="2"><i class="ge">⩾</i>93</td><td><i class="ge">⩾</i>95</td>
                <td class="wh nr"></td><td class="sl">/</td><td class="wh"></td><td colspan="3" class="wh"></td><td class="wh last"></td>
              </tr>
              <tr class="h29">
                <td class="lf">支路</td><td colspan="2"><i class="ge">⩾</i>90</td><td><i class="ge">⩾</i>92</td>
                <td class="wh nr"></td><td class="sl">/</td><td class="wh"></td><td colspan="3" class="wh"></td><td class="wh last"></td>
              </tr>
              <tr class="h44">
                <td colspan="2" rowspan="3" class="lf">＞<br>800<br>～<br>1500</td>
                <td class="lf">快速路<br>及主干<br>路</td><td colspan="2"><i class="ge">⩾</i>93</td><td><i class="ge">⩾</i>95</td>
                <td class="wh nr"></td><td class="sl">/</td><td class="wh"></td><td colspan="3" class="wh"></td><td class="wh last"></td>
              </tr>
              <tr class="h29">
                <td class="lf">次干路</td><td colspan="2"><i class="ge">⩾</i>90</td><td><i class="ge">⩾</i>92</td>
                <td class="wh nr"></td><td class="sl">/</td><td class="wh"></td><td colspan="3" class="wh"></td><td class="wh last"></td>
              </tr>
              <tr class="h28">
                <td class="lf">支路</td><td colspan="2"><i class="ge">⩾</i>87</td><td><i class="ge">⩾</i>90</td>
                <td class="wh nr"></td><td class="sl">/</td><td class="wh"></td><td colspan="3" class="wh"></td><td class="wh last"></td>
              </tr>
              <tr class="h44">
                <td colspan="2" rowspan="3" class="lf">＞<br>1500</td>
                <td class="lf">快速路<br>及主干<br>路</td><td colspan="2"><i class="ge">⩾</i>87</td><td><i class="ge">⩾</i>90</td>
                <td class="wh nr"></td><td class="sl">/</td><td class="wh"></td><td colspan="3" class="wh"></td><td class="wh last"></td>
              </tr>
              <tr class="h24">
                <td class="lf">次干路</td><td colspan="2"><i class="ge">⩾</i>87</td><td><i class="ge">⩾</i>90</td>
                <td class="wh nr"></td><td class="sl">/</td><td class="wh"></td><td colspan="3" class="wh"></td><td class="wh last"></td>
              </tr>
              <tr class="h24 lastrow">
                <td class="lf">支路</td><td colspan="2"><i class="ge">⩾</i>87</td><td><i class="ge">⩾</i>90</td>
                <td class="wh nr"></td><td class="sl">/</td><td class="wh"></td><td colspan="3" class="wh"></td><td class="wh last"></td>
              </tr>
            </table>

            <div class="foot">
              <svg class="barcode" viewBox="0 0 406 40" preserveAspectRatio="none">
                <defs>
                  <pattern id="bc" width="66" height="39" patternUnits="userSpaceOnUse" x="33">
                    <path stroke="#000" stroke-width="3" fill="none" d="M0 1.500h6m6 0h9m6 0h3m3 0h12m3 0h6m6 0h3M3 4.500h3m3 0h6m9 0h9m3 0h3m6 0h9m6 0h3M0 7.500h9m6 0h3m3 0h3m3 0h6m6 0h12m6 0h6M6 10.500h6m3 0h9m6 0h3m6 0h3m3 0h9m3 0h6M0 13.500h3m6 0h3m3 0h6m6 0h12m3 0h3m6 0h9M3 16.500h9m3 0h3m9 0h6m3 0h3m3 0h6m6 0h6M0 19.500h6m3 0h12m3 0h3m6 0h9m6 0h3m3 0h6M6 22.500h3m3 0h6m6 0h9m6 0h3m3 0h12M0 25.500h12m6 0h3m3 0h6m3 0h3m6 0h6m3 0h9M3 28.500h6m6 0h6m3 0h3m6 0h9m3 0h6m6 0h3M0 31.500h3m3 0h9m3 0h6m6 0h3m3 0h12m3 0h6M6 34.500h6m6 0h3m3 0h12m3 0h3m6 0h6m3 0h3M0 37.500h9m3 0h3m6 0h6m3 0h9m3 0h3m6 0h6"/>
                  </pattern>
                </defs>
                <rect width="406" height="40" fill="#fff"/>
                <rect x="0" y="0" width="17" height="40" fill="#000"/>
                <rect x="20" y="0" width="2" height="40" fill="#000"/>
                <rect x="24" y="0" width="2" height="40" fill="#000"/>
                <rect x="28" y="0" width="3" height="40" fill="#000"/>
                <rect x="33" y="0" width="332" height="39" fill="url(#bc)"/>
                <rect x="365" y="0" width="14" height="40" fill="#000"/>
                <rect x="385" y="0" width="2" height="40" fill="#000"/>
                <rect x="392" y="0" width="2" height="40" fill="#000"/>
                <rect x="398" y="0" width="2" height="40" fill="#000"/>
                <rect x="403" y="0" width="2" height="40" fill="#000"/>
              </svg>
              <svg class="logo" viewBox="0 0 36 36"><rect width="36" height="36" rx="3" fill="#d92b2f"/><path d="M16 5l8 5v14l-8 1zM8 15h6v10H7z" fill="#fff"/><path d="M2 31q16-10 32 0" fill="none" stroke="#fff" stroke-width="1.500"/></svg>
              <div class="org"><div class="o1">重庆市建设工程质量监督总站</div><div class="o2">重庆市城市建设档案馆</div></div>
              <div class="jz">监制</div>
            </div>
            <i class="handle"></i>
            <div class="mark m1"></div>
            <div class="mark m2"></div>
          </div>
        </div>
      </div>

      <div class="rspacer"></div>

      <div class="sheettabs">
        <span class="nav"><svg viewBox="0 0 10 10"><path d="M2 1v8h1.500V1zM9 1L4 5l5 4z"/></svg></span>
        <span class="nav"><svg viewBox="0 0 10 10"><path d="M7 1L2 5l5 4z"/></svg></span>
        <span class="nav"><svg viewBox="0 0 10 10"><path d="M3 1l5 4-5 4z"/></svg></span>
        <span class="nav"><svg viewBox="0 0 10 10"><path d="M8 1v8H6.500V1zM1 1l5 4-5 4z"/></svg></span>
        <span class="st on">检验批1</span><span class="st">检验批2</span><span class="st">说明1</span><span class="st">说明2</span>
      </div>
    </section>
  </main>

  <footer class="status">
    <span class="s1">筑业软件 十年品质 源于专注&emsp;&emsp;&emsp;1</span>
    <span class="s2">当前用户：管理员</span>
    <span class="s3">版本号：10.1.0.115</span>
    <span class="s4"></span>
  </footer>
</div>
</body>
</html>
```

FILE: styles.css
```css
* { box-sizing: border-box; }
html, body { margin: 0; padding: 0; height: 1349px; overflow: hidden; }
body { font: 12px/14px "Liberation Sans", "Noto Sans CJK SC", sans-serif; color: #111; background: #efefef; }
.defs { position: absolute; }
i, em { font-style: normal; }
.app { width: 1222px; height: 1349px; display: flex; flex-direction: column; overflow: hidden; }

/* title + menu */
.titlebar { height: 20px; flex: none; display: flex; align-items: flex-start; gap: 5px; background: linear-gradient(#aea427 0, #a89c22 55%, #8b7e16 90%, #666 100%); color: #f4f0d4; line-height: 12px; white-space: nowrap; overflow: hidden; word-spacing: 2px; }
.titlebar span { margin-top: -1px; }
.house { width: 14px; height: 14px; flex: none; }
.menubar { height: 21px; flex: none; display: flex; gap: 9.6px; align-items: center; padding-left: 6px; background: #f0f0f0; border-bottom: 1px solid #a8a8a8; white-space: nowrap; }
.menubar u { text-decoration: underline; }

/* main toolbar */
.toolbar { height: 37px; flex: none; display: flex; padding-left: 8px; background: #ececec; border-bottom: 1px solid #a0a0a0; box-shadow: 0 2px 0 #f4f4f4, 0 3px 0 #b0b0b0; }
.tb { display: flex; flex-direction: column; align-items: center; padding-top: 3px; font-size: 13px; line-height: 13px; flex: none; white-space: nowrap; }
.ic { width: 16px; height: 16px; margin-bottom: 1px; flex: none; }
.drop { flex: none; position: relative; display: block; align-self: stretch; }
.drop::after { content: ""; position: absolute; left: 50%; top: 50%; margin: -3px 0 0 -5px; border: 5px solid transparent; border-top: 5px solid #111; border-bottom: 0; }
.sep { flex: none; position: relative; }
.sep::after { content: ""; position: absolute; left: 50%; top: 3px; bottom: 3px; width: 1px; background: #aaa; }
.w4 { width: 4px; } .w6 { width: 6px; } .w8 { width: 8px; } .w12 { width: 12px; } .w16 { width: 16px; } .w18 { width: 18px; } .w19 { width: 19px; } .w20 { width: 20px; } .w22 { width: 22px; } .w23 { width: 23px; } .w29 { width: 29px; } .w33 { width: 33px; }
.w42 { width: 42px; } .w44 { width: 44px; } .w46 { width: 46px; } .w48 { width: 48px; } .w50 { width: 50px; } .w58 { width: 58px; } .w60 { width: 60px; } .w62 { width: 62px; } .w66 { width: 66px; } .w70 { width: 70px; } .w71 { width: 71px; } .w73 { width: 73px; } .w74 { width: 74px; } .w76 { width: 76px; } .w77 { width: 77px; } .w79 { width: 79px; } .w80 { width: 80px; } .w90 { width: 90px; }
.ml2 { margin-left: 2px; } .ml3 { margin-left: 3px; } .ml4 { margin-left: 4px; }
.pl3 { padding-left: 3px; } .pl4 { padding-left: 4px; }

.main { flex: 1; min-height: 0; display: flex; margin-top: 3px; }

/* left panel */
.left { width: 424px; flex: none; display: flex; flex-direction: column; border-right: 1px solid #999; border-bottom: 1px solid #888; border-top: 1px solid #bbb; padding-top: 5px; margin-bottom: 5px; }
.tabs { height: 21px; flex: none; display: flex; align-items: flex-end; padding-left: 3px; }
.tab { height: 18px; padding: 0 5px; line-height: 18px; background: #ececec; border: 1px solid #ddd; border-bottom: 0; font-size: 12px; }
.tab.on { height: 21px; width: 62px; line-height: 20px; padding-left: 6px; background: #f6f6f6; border-color: #e2e2e2; }
.lbody { flex: 1; min-height: 0; margin: 0 5px 6px 6px; display: flex; flex-direction: column; }
.ltool { height: 28px; flex: none; display: flex; align-items: center; padding: 4px 0 0 9px; background: #e9e9e9; }
.arr { width: 12px; height: 12px; margin-right: 11px; flex: none; }
.lsep { width: 1px; height: 18px; background: #aaa; flex: none; }
.lsep.sa { margin: 0 5px 0 -6px; }
.lsep.sb { margin: 0 6px 0 -3px; }
.lic { width: 18px; height: 18px; margin-right: 5px; flex: none; }
.fu { margin: 0 12px 0 2px; font-size: 13px; }
.filter { width: 16px; height: 16px; flex: none; }
.ltxt { margin-left: 1px; font-size: 12px; }
.combo { height: 22px; flex: none; display: flex; border: 1px solid #ccc; border-left-color: #999; background: #fff; }
.combo-t { flex: 1; padding: 3px 0 0 5px; white-space: nowrap; overflow: hidden; font-size: 13px; }
.combo-b { width: 64px; text-align: center; background: #e6e6e6; border: 1px solid #aaa; line-height: 19px; margin: 0; white-space: nowrap; }
.tree { flex: 1; min-height: 0; background: #fff; border-top: 1px solid #aaa; border-left: 1px solid #aaa; overflow: hidden; }
.row { height: 18px; width: 408px; display: flex; align-items: center; white-space: nowrap; overflow: hidden; line-height: 18px; }
.row.wide { width: 410px; }
.c { width: 19px; height: 18px; flex: none; display: block; position: relative; }
.g { background: repeating-linear-gradient(#999 0 1px, transparent 1px 2px) 9px 0/1px 100% no-repeat; }
.p, .m, .t { background: repeating-linear-gradient(#999 0 1px, transparent 1px 2px) 9px 0/1px 100% no-repeat, repeating-linear-gradient(90deg, #999 0 1px, transparent 1px 2px) 9px 9px/10px 1px no-repeat; }
.l, .e { background: repeating-linear-gradient(#999 0 1px, transparent 1px 2px) 9px 0/1px 10px no-repeat, repeating-linear-gradient(90deg, #999 0 1px, transparent 1px 2px) 9px 9px/10px 1px no-repeat; }
.p::before, .m::before { content: ""; position: absolute; left: 5px; top: 5px; width: 9px; height: 9px; background: #fff linear-gradient(#222, #222) center/5px 1px no-repeat; border: 1px solid #999; }
.p::after { content: ""; position: absolute; left: 9px; top: 7px; width: 1px; height: 5px; background: #222; }
.fd { width: 14px; height: 14px; margin-right: 7px; flex: none; }
.jian { width: 15px; margin-right: 6px; flex: none; color: #f00; font-weight: 400; text-align: center; }
.jian.ok { color: #080; margin-left: 1px; margin-right: 4px; }
.code { width: 42px; flex: none; font: 10px/18px "Liberation Mono", monospace; }
.sel { flex: 1; height: 18px; background: #9b9ba0; border: 1px solid #666; line-height: 16px; padding-left: 2px; }
.hgrip { height: 8px; flex: none; display: flex; justify-content: center; align-items: stretch; margin-right: 3px; background: #fff; }
.hgrip .dots { width: 70px; background: #e8e8e8 repeating-linear-gradient(90deg, #aaa 0 1px, transparent 1px 3px) center/100% 2px no-repeat; border: 1px solid #bbb; border-bottom: 0; border-radius: 3px 3px 0 0; }
.hbtn { width: 20px; line-height: 6px; text-align: center; font-size: 12px; font-weight: 700; background: #ddd; }
.sample { height: 127px; flex: none; background: #fff; border: 1px solid #999; margin-right: 1px; }
.sample-h { display: flex; justify-content: center; gap: 49px; height: 18px; line-height: 18px; }
.sample-r { display: flex; align-items: center; padding-left: 2px; gap: 5px; }
.xl { width: 14px; height: 14px; flex: none; }
.w1 { font: 10px/14px "Liberation Mono", monospace; }

.vsplit { width: 13px; margin-left: 3px; flex: none; display: flex; flex-direction: column; align-items: center; padding-top: 382px; border-left: 1px solid #aaa; }
.vdots { height: 238px; width: 6px; flex: none; background: repeating-linear-gradient(#bbb 0 1px, transparent 1px 3px) center/2px 100% no-repeat; }
.vbtn { width: 8px; height: 18px; flex: none; background: #d0d0d0; position: relative; }
.vbtn::after { content: ""; position: absolute; left: 1px; top: 4px; border: 5px solid transparent; border-left: 0; border-right: 5px solid #111; }

/* right panel */
.right { flex: 1; min-width: 0; display: flex; flex-direction: column; border-left: 1px solid #aaa; padding-top: 4px; }
.rt { flex: none; display: flex; align-items: center; background: #ececec; white-space: nowrap; overflow: hidden; }
.r1 { height: 24px; border-bottom: 1px solid #bbb; }
.r2 { height: 26px; border-bottom: 1px solid #bbb; }
.r2 .b { width: 25px; }
.r3 { height: 26px; border-bottom: 2px solid #999; font-size: 12px; }
.grip { width: 7px; height: 18px; flex: none; margin-left: 3px; border-left: 1px solid #aaa; }
.b { width: 26px; height: 22px; flex: none; display: flex; align-items: center; justify-content: center; color: #111; }
.b.wd30 { width: 30px; }
.b svg { width: 18px; height: 18px; }
.act { background: #f6f6f6; box-shadow: inset 0 0 0 1px #d8d8d8; }
.act2 { background: #bbb linear-gradient(90deg, transparent 50%, #ececec 50%); }
.sp { width: 1px; height: 18px; background: #aaa; flex: none; margin: 0 1px; }
.sel-box { height: 20px; flex: none; display: flex; align-items: center; padding-left: 3px; background: #fff; border: 1px solid #bbb; outline: 1px solid #ddd; position: relative; font-size: 12px; }
.cb { position: absolute; right: 0; top: 0; bottom: 0; width: 18px; background: #f4f4f4; }
.cb::after { content: ""; position: absolute; left: 4px; top: 7px; border: 5px solid transparent; border-top: 5px solid #111; border-bottom: 0; }
.fnt-t { font: 700 14px/14px "Liberation Serif", serif; margin: 0 5px 0 3px; }
.bt { font: 700 14px/14px "Liberation Serif", serif; color: #111; text-decoration-thickness: 2px; }
.it { display: block; width: 12px; height: 2px; background: #111; transform: rotate(-50deg); box-shadow: 0 0 0 .5px #111; }
.ac { color: #111; font: 700 13px/12px "Liberation Serif", serif; border-bottom: 3px solid #e11; }
.pm { font: 700 20px/20px "Liberation Sans", sans-serif; }
.b2 { font: italic 700 14px/14px "Liberation Serif", serif; color: #2a66b8; }
.sig { font: 700 15px/15px "Liberation Serif", serif; }
.ln { display: block; width: 52px; height: 1px; background: #000; margin-left: 3px; }
.f { display: flex; align-items: center; flex: none; height: 22px; gap: 1px; }
.f svg { width: 18px; height: 18px; flex: none; }
.no { font: 700 16px/16px "Liberation Serif", serif; transform: scaleX(.65); transform-origin: left; width: 15px; margin-right: 3px; flex: none; }
.xiang { color: #d02020; font-weight: 700; font-size: 14px; width: 18px; text-align: center; flex: none; }
.pl { margin-left: 10px; }
.dis { color: #aaa; gap: 6px; }

/* sheet */
.sheet { flex: none; width: 714px; background: #e0e0e0; border-right: 1px solid #ddd; border-bottom: 2px solid #ddd; }
.colhead { height: 16px; display: flex; margin-top: 1px; background: #f4f4f4; }
.colhead span { flex: none; text-align: center; font: 700 12px/16px "Liberation Serif", serif; border-right: 1px solid #888; height: 16px; overflow: hidden; }
.corner { width: 45px; background: linear-gradient(135deg, #f4f4f4 60%, #bbb 60%, #fff 85%); }
.stub { height: 3px; background: #e8e8e8; }
.rh-stub { display: block; width: 41px; height: 3px; background: #f2f2f2; border-right: 1px solid #888; }
.sheet-body { display: flex; }
.rowheads { width: 41px; flex: none; }
.rh { display: flex; align-items: center; justify-content: center; background: #f2f2f2; border-bottom: 1px solid #999; border-right: 1px solid #888; box-shadow: inset 1px 1px 0 #fff; font-size: 12px; line-height: 12px; overflow: hidden; }
.bold { font-weight: 700; }
.h2 { height: 2px; } .h5 { height: 5px; } .h17 { height: 17px; } .h18 { height: 18px; } .h20 { height: 20px; } .h24 { height: 24px; } .h28 { height: 28px; } .h29 { height: 29px; } .h30 { height: 30px; } .h32 { height: 32px; } .h35 { height: 35px; } .h36 { height: 36px; } .h44 { height: 44px; } .h47 { height: 47px; } .h48 { height: 48px; }
.gridarea { margin-left: 3px; width: 669px; position: relative; }
.titlecell { height: 47px; width: 665px; margin-top: 1px; background: #fff; border: 2px solid #111; border-right-width: 3px; border-bottom-width: 3px; text-align: center; font-size: 22px; font-weight: 500; line-height: 38px; letter-spacing: 2px; font-family: "Noto Sans CJK SC", sans-serif; }
.handle { position: absolute; left: 661px; top: 43px; width: 5px; height: 5px; background: #111; }
.sub { height: 18px; width: 665px; text-align: center; font-size: 13px; line-height: 19px; margin-top: -1px; border-bottom: 1px solid #d8d4cc; }
.codebar { height: 17px; width: 665px; display: flex; justify-content: flex-end; align-items: center; gap: 5px; padding-right: 2px; border-bottom: 1px solid #d8d4cc; }
.cd { font: 12px/15px "Liberation Sans", sans-serif; margin-right: -2px; }
.bx { width: 18px; height: 16px; background: #fff; border: 1px solid #111; text-align: center; font-size: 12px; line-height: 14px; }
.gap5 { height: 5px; }

.form { border-collapse: separate; border-spacing: 0; table-layout: fixed; width: 665px; border: 2px solid #111; font: 13px/13px "Noto Sans CJK SC", "Liberation Sans", sans-serif; color: #111; background: #dfdfdf; }
.c18 { width: 18px; } .c22 { width: 22px; } .c28 { width: 28px; } .c33 { width: 33px; } .c36 { width: 36px; } .c47 { width: 47px; } .c54 { width: 54px; } .c56 { width: 56px; } .c62 { width: 62px; } .c92 { width: 92px; }
.form td { padding: 0; text-align: center; vertical-align: middle; border-right: 1px solid #000; border-bottom: 1px solid #000; overflow: hidden; }
.form td.last { border-right: 0; }
.form .lastrow td, .form td[rowspan="19"], .form td[rowspan="23"], .form td[rowspan="11"], .form td[rowspan="9"] { border-bottom: 0; }
.form td.or { background: #f0c8a4; }
.form td.wh { background: #fff; }
.form td.nr { border-right: 0; }
.form td.sl { background: #dfdfdf; border-right: 1px solid #ccccc8; border-left: 1px solid #ccccc8; font-size: 13px; }
.form td.lf { text-align: left; padding-left: 3px; }
.form td.lf2 { text-align: left; padding-left: 2px; }
.form td.fill { color: #6a5020; letter-spacing: 2px; font-size: 11px; line-height: 11px; }
.form td.fs11 { letter-spacing: 2.5px; }
.nols { letter-spacing: 0; font-size: 12px; color: #333; }
.v { display: inline-block; writing-mode: vertical-rl; text-orientation: upright; line-height: 15px; letter-spacing: 0; }
.ge { font: 15px/13px "DejaVu Sans", sans-serif; }
.ck { display: block; width: 15px; height: 15px; border: 2px solid #666; background: #fff; }

.foot { display: flex; height: 40px; width: 668px; background: #e0e0e0; }
.barcode { width: 406px; height: 40px; flex: none; margin-left: 2px; }
.logo { width: 35px; height: 37px; flex: none; margin-top: 1px; }
.org { width: 179px; flex: none; padding: 0 2px 0 3px; border-right: 1px solid #d0ccc4; border-bottom: 1px solid #d0ccc4; }
.o1 { height: 20px; line-height: 20px; letter-spacing: .65px; white-space: nowrap; border-bottom: 1px solid #d4d0c8; font-size: 12px; margin: 0 -2px 0 -3px; padding-left: 3px; }
.o2 { height: 20px; line-height: 20px; text-align: justify; text-align-last: justify; font-size: 12px; text-justify: inter-character; }
.jz { width: 41px; flex: none; padding: 11px 0 0 3px; font-size: 12px; border-bottom: 1px solid #d0ccc4; }

.mark { position: absolute; border: 3px solid #f04040; pointer-events: none; }
.m1 { left: 135px; top: 504px; width: 200px; height: 31px; }
.m2 { left: 151px; top: 641px; width: 225px; height: 43px; }

.rspacer { flex: 1; min-height: 0; background: #efefef; }
.sheettabs { height: 19px; flex: none; display: flex; align-items: stretch; padding-left: 2px; border-top: 1px solid #aaa; border-bottom: 2px solid #666; background: #efefef; margin-bottom: 5px; }
.nav { width: 17px; display: flex; align-items: center; justify-content: center; border-right: 1px solid #aaa; }
.nav svg { width: 10px; height: 10px; }
.st { padding: 0 14px 0 15px; line-height: 16px; font-size: 12px; background: linear-gradient(112deg, transparent 7px, #444 7px, #444 8px, transparent 8px) left/12px 100% no-repeat; white-space: nowrap; margin-right: -9px; }
.st.on { background-color: #fff; }

.status { height: 7px; flex: none; overflow: visible; display: flex; white-space: nowrap; line-height: 14px; border-top: 1px solid #aaa; }
.status span { border-right: 1px solid #999; padding-left: 3px; overflow: hidden; height: 14px; }
.s1 { width: 276px; } .s2 { width: 128px; } .s3 { width: 122px; } .s4 { flex: 1; }
```
